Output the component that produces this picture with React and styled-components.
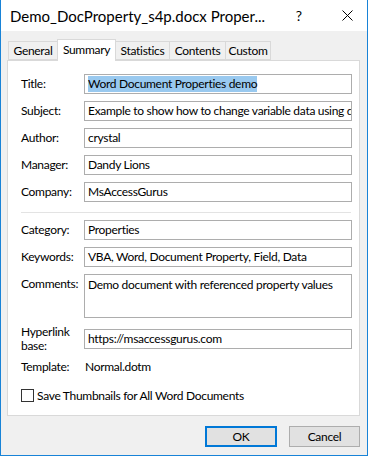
import React from 'react';
import styled, { createGlobalStyle } from 'styled-components';

const Global = createGlobalStyle`
  html, body { margin: 0; padding: 0; background: #fff; }
  body { font-family: "Segoe UI", Lato, "Noto Sans", sans-serif; color: #000; }
  * { box-sizing: border-box; }
`;

const Window = styled.div`
  width: 368px;
  height: 456px;
  border: 1px solid #1883d7;
  border-top: none;
  display: flex;
  flex-direction: column;
  background: #f0f0f0;
`;

const TitleBar = styled.div`
  height: 31px;
  flex-shrink: 0;
  background: #fff;
  display: flex;
  align-items: center;
`;

const TitleText = styled.div`
  flex: 1;
  padding-left: 9px;
  font-size: 15px;
  white-space: nowrap;
  overflow: hidden;
`;

const CaptionButton = styled.div`
  width: ${p => p.$w}px;
  height: 31px;
  display: flex;
  align-items: center;
  justify-content: center;
  font-size: 14px;
`;

const Body = styled.div`
  flex: 1;
  display: flex;
  flex-direction: column;
  padding: 8px 7px 8px 6px;
  font-size: 12px;
  letter-spacing: -0.3px;
`;

const TabRow = styled.div`
  height: 21px;
  display: flex;
  align-items: flex-end;
  padding-left: 1px;
  flex-shrink: 0;
`;

const Tab = styled.div`
  position: relative;
  z-index: ${p => (p.$active ? 2 : 1)};
  width: ${p => p.$w}px;
  height: ${p => (p.$active ? 22 : 19)}px;
  margin-right: -1px;
  margin-bottom: ${p => (p.$active ? -1 : 0)}px;
  border: 1px solid #d9d9d9;
  border-bottom: ${p => (p.$active ? 'none' : '1px solid #d9d9d9')};
  background: ${p => (p.$active ? '#fff' : '#f0f0f0')};
  display: flex;
  align-items: ${p => (p.$active ? 'flex-start' : 'center')};
  padding-top: ${p => (p.$active ? 2 : 1)}px;
  justify-content: center;
  font-size: 12px;
  line-height: 16px;
`;

const Panel = styled.div`
  position: relative;
  z-index: 0;
  flex: 1;
  background: #fff;
  border: 1px solid #d9d9d9;
  padding: 13px 7px 0 13px;
  display: flex;
  flex-direction: column;
  gap: 7px;
`;

const Row = styled.div`
  display: flex;
  align-items: ${p => (p.$top ? 'flex-start' : 'center')};
`;

const Label = styled.div`
  width: 63px;
  flex-shrink: 0;
  line-height: 14px;
  padding-top: ${p => (p.$top ? 3 : 0)}px;
`;

const Field = styled.div`
  flex: 1;
  height: ${p => p.$h || 20}px;
  border: 1px solid #adadad;
  background: #fff;
  padding: ${p => (p.$multi ? '2px 3px' : '0 3px')};
  display: flex;
  align-items: ${p => (p.$multi ? 'flex-start' : 'center')};
  white-space: nowrap;
  overflow: hidden;
  line-height: 16px;
`;

const Selected = styled.span`
  background: #99c9ef;
`;

const Value = styled.div`
  padding-left: 1px;
  line-height: 14px;
`;

const Separator = styled.div`
  height: 1px;
  background: #e3e3e3;
  margin: 3px 1px 0 0;
`;

const CheckRow = styled.label`
  display: flex;
  align-items: center;
  gap: 3px;
  margin-top: 7px;
  line-height: 15px;
`;

const Check = styled.span`
  width: 13px;
  height: 13px;
  border: 1px solid #333;
  background: #fff;
`;

const ButtonRow = styled.div`
  display: flex;
  justify-content: flex-end;
  gap: 12px;
  margin-top: 10px;
  flex-shrink: 0;
`;

const Button = styled.div`
  width: ${p => p.$w}px;
  height: 21px;
  background: #e1e1e1;
  border: ${p => (p.$default ? '2px solid #0078d7' : '1px solid #adadad')};
  display: flex;
  align-items: center;
  justify-content: center;
  font-size: 12px;
`;

const fields = [
  ['Title:', <Selected>Word Document Properties demo</Selected>],
  ['Subject:', 'Example to show how to change variable data using document properties'],
  ['Author:', 'crystal'],
  ['Manager:', 'Dandy Lions'],
  ['Company:', 'MsAccessGurus'],
];

export default function App() {
  return (
    <Window>
      <Global />
      <TitleBar>
        <TitleText>Demo_DocProperty_s4p.docx Proper...</TitleText>
        <CaptionButton $w={56}>?</CaptionButton>
        <CaptionButton $w={40}>
          <svg width="11" height="11" viewBox="0 0 11 11">
            <path d="M0.5 0.5 L10.5 10.5 M10.5 0.5 L0.5 10.5" stroke="#000" strokeWidth="1" />
          </svg>
        </CaptionButton>
      </TitleBar>
      <Body>
        <TabRow>
          <Tab $w={50}>General</Tab>
          <Tab $w={59} $active>Summary</Tab>
          <Tab $w={55}>Statistics</Tab>
          <Tab $w={57}>Contents</Tab>
          <Tab $w={46}>Custom</Tab>
        </TabRow>
        <Panel>
          {fields.map(([l, v]) => (
            <Row key={l}>
              <Label>{l}</Label>
              <Field>{v}</Field>
            </Row>
          ))}
          <Separator />
          <Row>
            <Label>Category:</Label>
            <Field>Properties</Field>
          </Row>
          <Row>
            <Label>Keywords:</Label>
            <Field>VBA, Word, Document Property, Field, Data</Field>
          </Row>
          <Row $top>
            <Label $top>Comments:</Label>
            <Field $h={44} $multi>Demo document with referenced property values</Field>
          </Row>
          <Row>
            <Label>Hyperlink<br />base:</Label>
            <Field>https://msaccessgurus.com</Field>
          </Row>
          <Row>
            <Label>Template:</Label>
            <Value>Normal.dotm</Value>
          </Row>
          <CheckRow>
            <Check />
            Save Thumbnails for All Word Documents
          </CheckRow>
        </Panel>
        <ButtonRow>
          <Button $w={72} $default>OK</Button>
          <Button $w={71}>Cancel</Button>
        </ButtonRow>
      </Body>
    </Window>
  );
}
